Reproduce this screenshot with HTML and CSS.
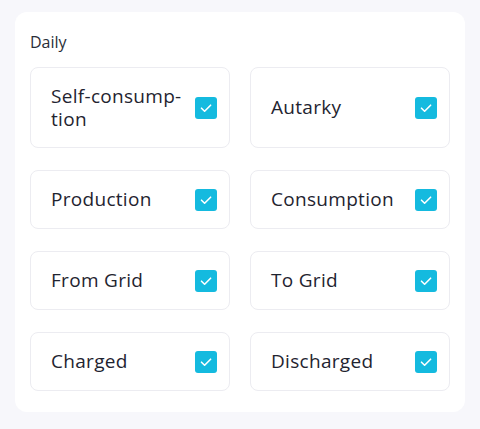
FILE: index.html
```html
<!DOCTYPE html>
<html>
<head>
<meta charset="utf-8">
<link rel="stylesheet" href="styles.css">
</head>
<body>
<div class="card">
  <div class="title">Daily</div>
  <div class="grid">
    <div class="tile"><span class="label">Self-consump&shy;tion</span><span class="box"><svg viewBox="0 0 22 22" width="22" height="22"><path d="M6.5 11.2 L9.6 14.2 L15.6 8.2" fill="none" stroke="#fff" stroke-width="1.6" stroke-linecap="round" stroke-linejoin="round"/></svg></span></div>
    <div class="tile"><span class="label">Autarky</span><span class="box"><svg viewBox="0 0 22 22" width="22" height="22"><path d="M6.5 11.2 L9.6 14.2 L15.6 8.2" fill="none" stroke="#fff" stroke-width="1.6" stroke-linecap="round" stroke-linejoin="round"/></svg></span></div>
    <div class="tile"><span class="label">Production</span><span class="box"><svg viewBox="0 0 22 22" width="22" height="22"><path d="M6.5 11.2 L9.6 14.2 L15.6 8.2" fill="none" stroke="#fff" stroke-width="1.6" stroke-linecap="round" stroke-linejoin="round"/></svg></span></div>
    <div class="tile"><span class="label">Consumption</span><span class="box"><svg viewBox="0 0 22 22" width="22" height="22"><path d="M6.5 11.2 L9.6 14.2 L15.6 8.2" fill="none" stroke="#fff" stroke-width="1.6" stroke-linecap="round" stroke-linejoin="round"/></svg></span></div>
    <div class="tile"><span class="label">From Grid</span><span class="box"><svg viewBox="0 0 22 22" width="22" height="22"><path d="M6.5 11.2 L9.6 14.2 L15.6 8.2" fill="none" stroke="#fff" stroke-width="1.6" stroke-linecap="round" stroke-linejoin="round"/></svg></span></div>
    <div class="tile"><span class="label">To Grid</span><span class="box"><svg viewBox="0 0 22 22" width="22" height="22"><path d="M6.5 11.2 L9.6 14.2 L15.6 8.2" fill="none" stroke="#fff" stroke-width="1.6" stroke-linecap="round" stroke-linejoin="round"/></svg></span></div>
    <div class="tile"><span class="label">Charged</span><span class="box"><svg viewBox="0 0 22 22" width="22" height="22"><path d="M6.5 11.2 L9.6 14.2 L15.6 8.2" fill="none" stroke="#fff" stroke-width="1.6" stroke-linecap="round" stroke-linejoin="round"/></svg></span></div>
    <div class="tile"><span class="label">Discharged</span><span class="box"><svg viewBox="0 0 22 22" width="22" height="22"><path d="M6.5 11.2 L9.6 14.2 L15.6 8.2" fill="none" stroke="#fff" stroke-width="1.6" stroke-linecap="round" stroke-linejoin="round"/></svg></span></div>
  </div>
</div>
</body>
</html>
```
FILE: styles.css
```css
html, body {
  margin: 0;
  padding: 0;
  background: #f7f7fb;
}
body {
  padding: 12px 15px;
  font-family: "Open Sans", "Noto Sans", sans-serif;
  color: #1f2430;
}
.card {
  width: 450px;
  height: 400px;
  box-sizing: border-box;
  background: #ffffff;
  border-radius: 12px;
  padding: 18px 15px 20px;
}
.title {
  font-size: 16px;
  line-height: 24px;
  color: #2a2e38;
  margin-bottom: 13px;
}
.grid {
  display: grid;
  grid-template-columns: 1fr 1fr;
  column-gap: 20px;
  row-gap: 22px;
}
.tile {
  display: flex;
  align-items: center;
  justify-content: space-between;
  gap: 8px;
  box-sizing: border-box;
  min-height: 59px;
  padding: 16.5px 12px 16.5px 20px;
  border: 1px solid #ececf1;
  border-radius: 8px;
}
.label {
  font-size: 19px;
  font-weight: 500;
  line-height: 23px;
  letter-spacing: 0.3px;
  hyphens: manual;
  max-width: 140px;
}
.box {
  flex: none;
  width: 22px;
  height: 22px;
  border-radius: 3px;
  background: #14badf;
  display: flex;
}
```
